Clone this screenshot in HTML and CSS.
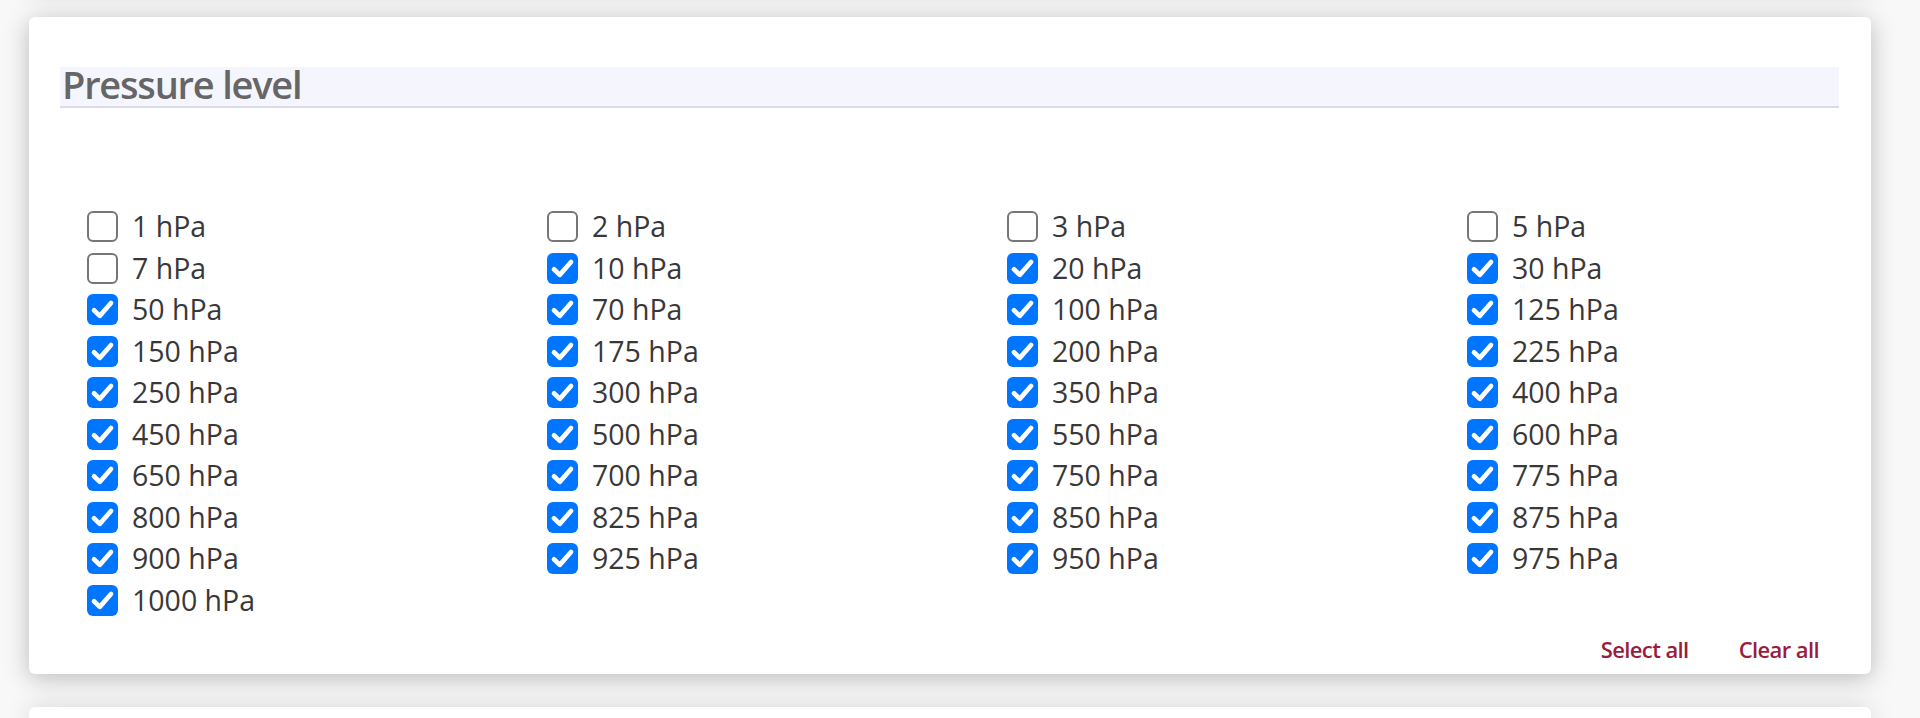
FILE: index.html
```html
<!DOCTYPE html>
<html lang="en">
<head>
<meta charset="utf-8">
<title>Pressure level</title>
<link rel="stylesheet" href="styles.css">
</head>
<body>
<div class="stack">
  <section class="card card-prev"></section>
  <section class="card">
    <h2 class="section-title">Pressure level</h2>
    <div class="options">
      <label class="opt"><input type="checkbox"><span>1 hPa</span></label>
      <label class="opt"><input type="checkbox"><span>2 hPa</span></label>
      <label class="opt"><input type="checkbox"><span>3 hPa</span></label>
      <label class="opt"><input type="checkbox"><span>5 hPa</span></label>
      <label class="opt"><input type="checkbox"><span>7 hPa</span></label>
      <label class="opt"><input type="checkbox" checked><span>10 hPa</span></label>
      <label class="opt"><input type="checkbox" checked><span>20 hPa</span></label>
      <label class="opt"><input type="checkbox" checked><span>30 hPa</span></label>
      <label class="opt"><input type="checkbox" checked><span>50 hPa</span></label>
      <label class="opt"><input type="checkbox" checked><span>70 hPa</span></label>
      <label class="opt"><input type="checkbox" checked><span>100 hPa</span></label>
      <label class="opt"><input type="checkbox" checked><span>125 hPa</span></label>
      <label class="opt"><input type="checkbox" checked><span>150 hPa</span></label>
      <label class="opt"><input type="checkbox" checked><span>175 hPa</span></label>
      <label class="opt"><input type="checkbox" checked><span>200 hPa</span></label>
      <label class="opt"><input type="checkbox" checked><span>225 hPa</span></label>
      <label class="opt"><input type="checkbox" checked><span>250 hPa</span></label>
      <label class="opt"><input type="checkbox" checked><span>300 hPa</span></label>
      <label class="opt"><input type="checkbox" checked><span>350 hPa</span></label>
      <label class="opt"><input type="checkbox" checked><span>400 hPa</span></label>
      <label class="opt"><input type="checkbox" checked><span>450 hPa</span></label>
      <label class="opt"><input type="checkbox" checked><span>500 hPa</span></label>
      <label class="opt"><input type="checkbox" checked><span>550 hPa</span></label>
      <label class="opt"><input type="checkbox" checked><span>600 hPa</span></label>
      <label class="opt"><input type="checkbox" checked><span>650 hPa</span></label>
      <label class="opt"><input type="checkbox" checked><span>700 hPa</span></label>
      <label class="opt"><input type="checkbox" checked><span>750 hPa</span></label>
      <label class="opt"><input type="checkbox" checked><span>775 hPa</span></label>
      <label class="opt"><input type="checkbox" checked><span>800 hPa</span></label>
      <label class="opt"><input type="checkbox" checked><span>825 hPa</span></label>
      <label class="opt"><input type="checkbox" checked><span>850 hPa</span></label>
      <label class="opt"><input type="checkbox" checked><span>875 hPa</span></label>
      <label class="opt"><input type="checkbox" checked><span>900 hPa</span></label>
      <label class="opt"><input type="checkbox" checked><span>925 hPa</span></label>
      <label class="opt"><input type="checkbox" checked><span>950 hPa</span></label>
      <label class="opt"><input type="checkbox" checked><span>975 hPa</span></label>
      <label class="opt"><input type="checkbox" checked><span>1000 hPa</span></label>
    </div>
    <div class="actions">
      <a class="action" href="#">Select all</a>
      <a class="action" href="#">Clear all</a>
    </div>
  </section>
  <section class="card card-next"></section>
</div>
</body>
</html>
```

FILE: styles.css
```css
html, body {
  margin: 0;
  padding: 0;
}

body {
  background: #f8f8f8;
  font-family: "Open Sans", "Noto Sans", "Liberation Sans", sans-serif;
  color: #383838;
  overflow: hidden;
  height: 718px;
}

.stack {
  display: flex;
  flex-direction: column;
  gap: 33px;
  margin: -60px 49px 0 29px;
}

.card {
  background: #ffffff;
  border-radius: 6px;
  box-shadow: 0 4px 24px rgba(0, 0, 0, 0.25);
  padding: 50px 32px 10px 31px;
}

.card-prev {
  height: 44px;
  padding: 0;
}

.card-next {
  height: 11px;
  padding: 0;
  border-radius: 6px 6px 0 0;
}

.section-title {
  margin: 0;
  background: #f5f5fe;
  border-bottom: 2px solid #dcdce4;
  color: #666666;
  font-size: 38px;
  font-weight: 600;
  letter-spacing: -1.2px;
  line-height: 35px;
  padding: 0 0 4px 2px;
}

.options {
  display: grid;
  grid-template-columns: repeat(3, 460px) 1fr;
  grid-auto-rows: 41.5px;
  margin: 98px 0 0 27px;
}

.opt {
  display: flex;
  align-items: center;
  gap: 14px;
  font-size: 28.5px;
  line-height: 41.5px;
  color: #383838;
  white-space: nowrap;
}

.opt input {
  -webkit-appearance: none;
  appearance: none;
  margin: 0;
  width: 31px;
  height: 31px;
  flex: none;
  box-sizing: border-box;
  border: 2.5px solid #767676;
  border-radius: 6px;
  background: #ffffff;
}

.opt input:checked {
  border: none;
  background-color: #0075ff;
  background-image: url("data:image/svg+xml,%3Csvg xmlns='http://www.w3.org/2000/svg' viewBox='0 0 16 16'%3E%3Cpath d='M3.6 8.4 L6.6 11.3 L12.4 4.6' fill='none' stroke='white' stroke-width='2.4' stroke-linecap='round' stroke-linejoin='round'/%3E%3C/svg%3E");
  background-size: 100% 100%;
}

.actions {
  display: flex;
  justify-content: flex-end;
  gap: 50px;
  margin-top: 13px;
  padding-right: 20px;
}

.action {
  color: #9a1c3c;
  text-decoration: none;
  font-size: 22px;
  font-weight: 600;
  letter-spacing: -0.6px;
  line-height: 30px;
}
```
